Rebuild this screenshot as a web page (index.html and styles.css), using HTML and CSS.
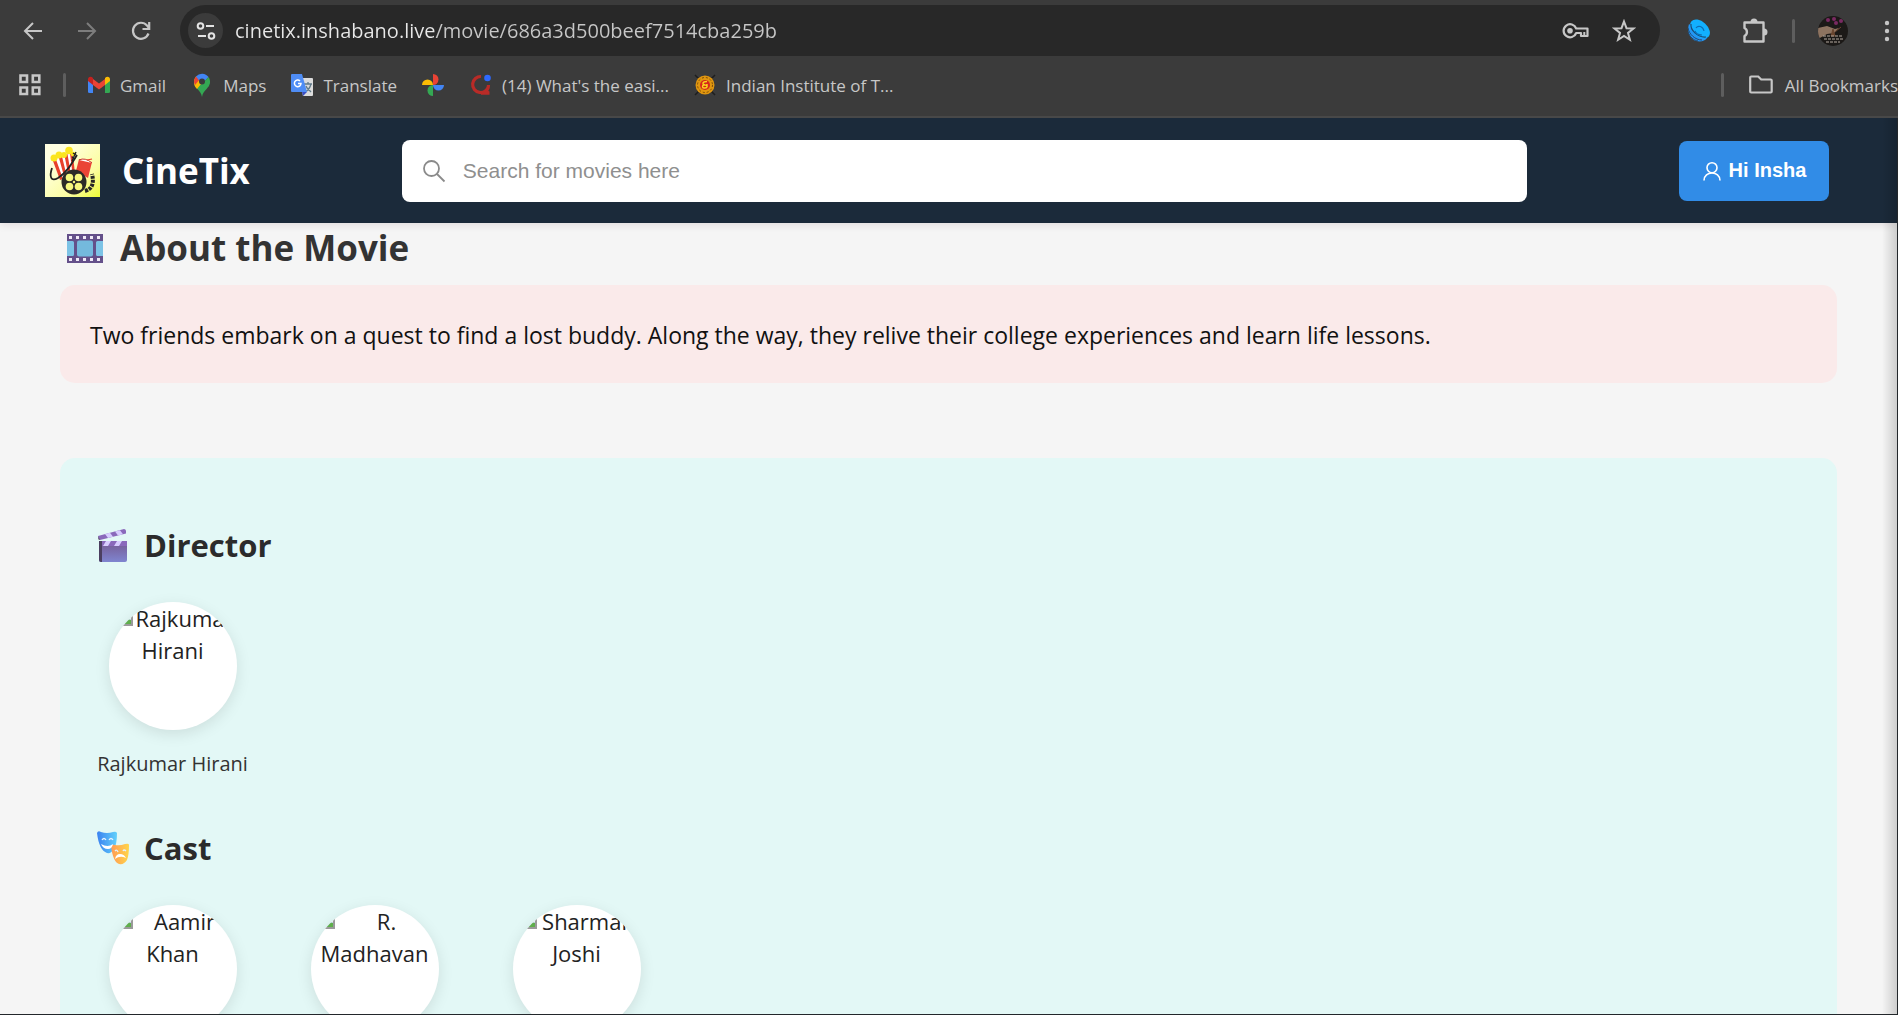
FILE: index.html
```html
<!DOCTYPE html>
<html lang="en">
<head>
<meta charset="utf-8">
<title>CineTix</title>
<link rel="stylesheet" href="styles.css">
</head>
<body>
<svg class="defs" aria-hidden="true">
  <symbol id="broken" viewBox="0 0 24 24">
    <path d="M2 2h20v20H2z" fill="#c9d9f2"/>
    <path d="M3 22v-5l6-4 5 3 8 2v4z" fill="#5fae4c"/>
    <path d="M14 16l8-8v9z" fill="#eef2ee"/>
    <path d="M1 1h22v22H1z" fill="none" stroke="#9a9a9a" stroke-width="2"/>
  </symbol>
</svg>

<header class="browser">
  <div class="toolbar">
    <div class="history">
      <button class="icon-btn" aria-label="Back"><svg width="20" height="20" viewBox="0 0 20 20"><path d="M19 10H2M10 2l-8 8 8 8" fill="none" stroke="#c7c7c7" stroke-width="2"/></svg></button>
      <button class="icon-btn" aria-label="Forward"><svg width="20" height="20" viewBox="0 0 20 20"><path d="M1 10h17M10 2l8 8-8 8" fill="none" stroke="#7d7d7d" stroke-width="2"/></svg></button>
      <button class="icon-btn" aria-label="Reload"><svg width="20" height="20" viewBox="0 0 20 20"><path d="M17.500 12.500A8 8 0 1 1 16 4.500L18 7M18.200 1v7H11.500" fill="none" stroke="#c7c7c7" stroke-width="2.200"/></svg></button>
    </div>
    <div class="address">
      <button class="site-btn" aria-label="Site information"><svg width="20" height="20" viewBox="0 0 20 20"><g fill="none" stroke="#e3e3e3" stroke-width="2"><circle cx="4.500" cy="5" r="2.800"/><path d="M10 5h8M2 15h8"/><circle cx="15.500" cy="15" r="2.800"/></g></svg></button>
      <input class="url" type="text" aria-label="Address" value="cinetix.inshabano.live/movie/686a3d500beef7514cba259b">
      <button class="icon-btn" aria-label="Passwords"><svg width="28" height="18" viewBox="0 0 28 18"><path d="M14.200 6.500A6.500 6.500 0 1 0 14.200 11H19v3h6.500V6.500z" fill="none" stroke="#c7c7c7" stroke-width="2.200" stroke-linejoin="round"/><circle cx="8" cy="8.700" r="2.800" fill="#c7c7c7"/><path d="M22.300 10v4" stroke="#c7c7c7" stroke-width="2"/></svg></button>
      <button class="icon-btn" aria-label="Bookmark this page"><svg width="24" height="24" viewBox="0 0 24 24"><path d="M12 2.500l2.500 6.700 7 .3-5.500 4.400 1.900 6.900L12 17l-5.900 3.800L8 13.900 2.500 9.500l7-.3z" fill="none" stroke="#c7c7c7" stroke-width="2"/></svg></button>
    </div>
    <div class="extensions">
      <button class="icon-btn" aria-label="Shazam extension"><svg width="24" height="24" viewBox="0 0 24 24"><path d="M2 5C0 11 2 20 9 22c5 1 9 0 11-3z" fill="#2496f5"/><path d="M1 9c1 6 7 12 14 12M1 13c2 5 5 8 10 9" fill="none" stroke="#234a70"/><ellipse cx="13" cy="10" rx="11.500" ry="7.500" transform="rotate(42 13 10)" fill="#12b0ff"/><path d="M4 5c-1 6 7 14 15 13" fill="none" stroke="#1c4a78" stroke-width="1.200"/><path d="M9 9c2-3 7-2 8 3M8 12c1 3 4 4 7 4" fill="none" stroke="#0d6db5" stroke-width="1.200"/></svg></button>
      <button class="icon-btn" aria-label="Extensions"><svg width="28" height="28" viewBox="0 0 28 28"><path d="M3.500 5.500h19v19h-19v-5.500a4.500 4.500 0 0 0 0-8z" fill="none" stroke="#c7c7c7" stroke-width="2.400" stroke-linejoin="round"/><path d="M9.500 5a3.500 3.500 0 0 1 7 0zM23 11.500a3.500 3.500 0 0 1 0 7z" fill="#c7c7c7"/></svg></button>
      <span class="divider"></span>
      <button class="icon-btn" aria-label="Profile"><svg width="30" height="30" viewBox="0 0 30 30"><clipPath id="av"><circle cx="15" cy="15" r="15"/></clipPath><g clip-path="url(#av)"><path d="M0 0h30v30H0z" fill="#1c1917"/><path d="M0 12l9-2 8 3 4-1-5 5-7 1-9 5z" fill="#8d7360"/><path d="M13 20l2-7 2 7zM17 16l6-5" fill="#6b4630" stroke="#6b4630"/><g fill="#7a2a62"><circle cx="10" cy="4" r="2"/><circle cx="16" cy="3" r="2"/><circle cx="18" cy="7" r="2"/><circle cx="23" cy="5" r="2"/></g><path d="M5 20h20M6 23h19M8 26h14" stroke="#b5aba2" stroke-dasharray="3 1"/></g></svg></button>
      <button class="icon-btn" aria-label="Menu"><svg width="6" height="24" viewBox="0 0 6 24"><g fill="#c7c7c7"><circle cx="3" cy="4" r="2.200"/><circle cx="3" cy="12" r="2.200"/><circle cx="3" cy="20" r="2.200"/></g></svg></button>
    </div>
  </div>
  <nav class="bookmarks" aria-label="Bookmarks">
    <a class="bookmark" href="#" aria-label="Apps"><svg width="24" height="24" viewBox="0 0 24 24"><path d="M2.500 2.500h6.500v6.500H2.500zM14.800 2.500h6.500v6.500h-6.500zM2.500 14.500h6.500v6.500H2.500zM14.800 14.500h6.500v6.500h-6.500z" fill="none" stroke="#c7c7c7" stroke-width="2.600"/></svg></a>
    <span class="divider"></span>
    <a class="bookmark" href="#"><svg width="24" height="24" viewBox="0 0 24 24"><path d="M1 6v13q0 1 1.500 1H6v-9z" fill="#4285f4"/><path d="M18 11v9h3.500q1.500 0 1.500-1V6z" fill="#34a853"/><path d="M6 12V6l6 4.500L18 6v6l-6 4.500z" fill="#ea4335"/><path d="M1 6.500C1 3.500 4 3 6 5v7l-5-4z" fill="#c5221f"/><path d="M23 6.500C23 3.500 20 3 18 5v7l5-4z" fill="#fbbc04"/></svg>Gmail</a>
    <a class="bookmark" href="#"><svg width="24" height="24" viewBox="0 0 24 24"><path d="M4 9c0 6 7 8 8 15 1-7 8-9 8-15z" fill="#34a853"/><path d="M4 9c0 3 1 5 3 7l8-10L6 3.500A8 8 0 0 0 4 9z" fill="#fbbc04"/><path d="M6 3.500A8 8 0 0 0 4 9l1 3 6-7z" fill="#ea4335"/><path d="M6 3.500A8 8 0 0 1 18.500 4L12 11z" fill="#4285f4"/><path d="M18.500 4C20 6 20 8 20 9l-2 5-6-3z" fill="#34a853"/><circle cx="12" cy="8.500" r="3" fill="#3b3b3b"/></svg>Maps</a>
    <a class="bookmark" href="#"><svg width="24" height="24" viewBox="0 0 24 24"><path d="M9 5h13q1 0 1 1v16q0 1-1 1h-9z" fill="#dcdcdc"/><path d="M14 11h8M18 9v2M15 19c4-2 5-4 6-8M16 13c1 3 3 4 5 6" fill="none" stroke="#607988" stroke-width="1.300"/><path d="M12 19h5l-4 4z" fill="#3a4fc4"/><path d="M2 1h10l5 18H2q-1 0-1-1V2q0-1 1-1z" fill="#4f8df5"/><path d="M10 8a3.300 3.300 0 1 0 1 2.500H8" fill="none" stroke="#fff" stroke-width="1.500"/></svg>Translate</a>
    <a class="bookmark" href="#" aria-label="Photos"><svg width="24" height="24" viewBox="0 0 24 24"><path d="M12 1a5.500 5.500 0 0 1 0 11z" fill="#ea4335"/><path d="M23 12a5.500 5.500 0 0 1-11 0z" fill="#4285f4"/><path d="M12 23a5.500 5.500 0 0 1 0-11z" fill="#34a853"/><path d="M1 12a5.500 5.500 0 0 1 11 0z" fill="#fbbc04"/></svg></a>
    <a class="bookmark" href="#"><svg width="24" height="24" viewBox="0 0 24 24"><path d="M12 3.500a8 8 0 1 0 7.500 9.500M19.500 12q0 5-4 6.500M12 20.200h8.500q-2 0-3-2.500" fill="none" stroke="#b92b27" stroke-width="3.200"/><circle cx="18.500" cy="5" r="3.300" fill="#2e69ff"/></svg>(14) What's the easi...</a>
    <a class="bookmark" href="#"><svg width="24" height="24" viewBox="0 0 24 24"><path d="M2 2l20 20M22 2L2 22" stroke="#1e1e1e" stroke-width="1.500"/><circle cx="12" cy="12" r="9.500" fill="#e0960f"/><circle cx="12" cy="12" r="7.500" fill="none" stroke="#7a4a08" stroke-dasharray="2 2"/><circle cx="12" cy="12" r="5" fill="#d8261c"/><path d="M14 8.500c-5 0-5 3-2 3.500 3 0 3 3.500-1 3-2 0-2-3 0-3M14 11v3" fill="none" stroke="#f9d71c" stroke-width="1.400"/></svg>Indian Institute of T...</a>
    <span class="divider push"></span>
    <a class="bookmark folder" href="#"><svg width="26" height="24" viewBox="0 0 26 24"><path d="M2.200 4.500q0-1 1-1h7l3 3h9.500q1 0 1 1v11q0 1-1 1H3.200q-1 0-1-1z" fill="none" stroke="#c7c7c7" stroke-width="2.200"/></svg>All Bookmarks</a>
  </nav>
</header>

<div class="page">
  <header class="navbar">
    <a class="brand" href="#">
      <svg width="55" height="53" viewBox="0 0 55 53">
        <defs><linearGradient id="lg" x1="0" y1="0" x2="1" y2="1"><stop offset="0.200" stop-color="#ffffe2"/><stop offset="0.700" stop-color="#fbfda0"/><stop offset="1" stop-color="#edfb35"/></linearGradient></defs>
        <path d="M0 0h55v53H0z" fill="url(#lg)"/>
        <path d="M8 17l19-9 3 22-15 6z" fill="#fff"/>
        <path d="M8 17l3-1.500L18 35l-3 1zM14 14l3-1.500L22 33l-2.500 1zM19.500 11.500l3-1.500L26 31l-2.500 1zM25 9l2.500-1L30 29l-2.500 1z" fill="#e8402c"/>
        <g fill="#fbe51f"><circle cx="9" cy="14" r="3.500"/><circle cx="14" cy="11" r="3.500"/><circle cx="19" cy="11" r="3"/><circle cx="24" cy="6.500" r="3.800"/><circle cx="28" cy="10" r="2.300"/></g>
        <path d="M7 24c-3 9-1 14 6 10C21 29 26 21 32 11" fill="none" stroke="#222" stroke-width="1.800"/><path d="M31 8l-4 9M28 9l3 2M27 13l3 2" stroke="#222" stroke-width="1.400"/>
        <path d="M34 15l13 3-4 16-12-7z" fill="#ea4436"/><path d="M34 16q6-3 13 3" fill="#fff" stroke="#c9362b"/><path d="M42 16l5-1" stroke="#e8402c" stroke-width="1.200"/>
        <path d="M40 47c8-2 9-9 7-17" fill="none" stroke="#262626" stroke-width="4" stroke-dasharray="3 1"/>
        <circle cx="29" cy="38" r="12.500" fill="#2b2a27"/>
        <g fill="#f7f87e"><circle cx="24.500" cy="33.500" r="3.800"/><circle cx="33.500" cy="33.500" r="3.800"/><circle cx="24.500" cy="42.500" r="3.800"/><circle cx="33.500" cy="42.500" r="3.800"/><circle cx="29" cy="38" r="1.200"/></g>
      </svg>
      <span>CineTix</span>
    </a>
    <label class="search">
      <svg width="24" height="24" viewBox="0 0 24 24"><g fill="none" stroke="#8a8a8a" stroke-width="1.800"><circle cx="9.500" cy="9.500" r="7.500"/><path d="M15 15l7.500 7.500"/></g></svg>
      <input type="search" placeholder="Search for movies here" aria-label="Search for movies here">
    </label>
    <button class="user"><svg width="20" height="20" viewBox="0 0 20 20"><g fill="none" stroke="#fff" stroke-width="1.600"><circle cx="10" cy="6.700" r="5"/><path d="M2 19.500c0-10 16-10 16 0"/></g></svg>Hi Insha</button>
  </header>

  <main class="content">
    <h1 class="about-title">
      <svg width="36" height="29" viewBox="0 0 36 29"><path d="M0 0h36v29H0z" fill="#64508a"/><path d="M0 7h5.500q1.500 0 1.500 1.500v12q0 1.500-1.500 1.500H0zM36 7h-5.500q-1.500 0-1.500 1.500v12q0 1.500 1.500 1.500H36z" fill="#7cc3e6"/><rect x="10" y="6.500" width="16" height="16" rx="2" fill="#74b9dd"/><g fill="#efe9f7"><path d="M2 2h3v3H2zM9 2h3v3H9zM16 2h3v3h-3zM23 2h3v3h-3zM30 2h3v3h-3zM2 24h3v3H2zM9 24h3v3H9zM16 24h3v3h-3zM23 24h3v3h-3zM30 24h3v3h-3z"/></g></svg>
      About the Movie
    </h1>
    <p class="summary">Two friends embark on a quest to find a lost buddy. Along the way, they relive their college experiences and learn life lessons.</p>

    <section class="people">
      <h2 class="group-title">
        <svg width="32" height="34" viewBox="0 0 32 34"><defs><linearGradient id="cb" x1="0" y1="0" x2="0" y2="1"><stop offset="0" stop-color="#75588f"/><stop offset="1" stop-color="#7f85d0"/></linearGradient></defs><path d="M1 8L27 1q1.500 0 2 1.500v3L3 12q-1.500-1-2-4z" fill="#8a69bb"/><path d="M8 6l5-1.300 3 4-5 1.300zM18 3.500l5-1.300 3 4-5 1.300z" fill="#d7ccff"/><path d="M1 8l2 4-1.500-.5z" fill="#4b3c57"/><path d="M2 13h28v19q0 2-2 2H4q-2 0-2-2z" fill="url(#cb)"/><path d="M2 13h28v5H2z" fill="#8a69bb"/><path d="M9 13h5l-3 5H6zM20 13h5l-3 5h-5z" fill="#d7ccff"/><path d="M2 13h3v21H4q-2 0-2-2z" fill="#4b3f60"/></svg>
        Director
      </h2>
      <ul class="cards">
        <li class="card">
          <div class="photo"><svg width="24" height="24"><use href="#broken"/></svg>Rajkumar Hirani</div>
          <span class="name">Rajkumar Hirani</span>
        </li>
      </ul>

      <h2 class="group-title">
        <svg width="32" height="34" viewBox="0 0 32 34"><defs><linearGradient id="mb"><stop offset="0" stop-color="#3b82f0"/><stop offset="1" stop-color="#62d0fb"/></linearGradient><linearGradient id="mo"><stop offset="0" stop-color="#ff9a55"/><stop offset="1" stop-color="#ffd54a"/></linearGradient></defs><path d="M0 2q1-3 4-1 6 2 12 0 3-1 4 1 0 11-3 16-3 5-7 4-8-3-10-20z" fill="url(#mb)"/><path d="M14 15q1-2 4-1 5 1 10-1 4-1 4 1 0 10-2 15-3 5-8 4-6-2-8-18z" fill="url(#mo)"/><path d="M5 9q2-3 4 0M12 9q2-3 4 0M18 20q2-2 3 1M26 20q1-2 3 0" fill="none" stroke="#e4f1ff" stroke-width="1.300"/><path d="M4 13q7 4 12 0-1 5-5 5-5 0-7-5zM18 28q1-5 5-5 4 0 6 4-6-3-11 1z" fill="#fff"/></svg>
        Cast
      </h2>
      <ul class="cards">
        <li class="card"><div class="photo"><svg width="24" height="24"><use href="#broken"/></svg>Aamir Khan</div></li>
        <li class="card"><div class="photo"><svg width="24" height="24"><use href="#broken"/></svg>R. Madhavan</div></li>
        <li class="card"><div class="photo"><svg width="24" height="24"><use href="#broken"/></svg>Sharman Joshi</div></li>
      </ul>
    </section>
  </main>
</div>
</body>
</html>
```

FILE: styles.css
```css
* { box-sizing: border-box; }

body {
  margin: 0;
  height: 100vh;
  display: flex;
  flex-direction: column;
  overflow: hidden;
  background: #f5f5f5;
  font-family: "Open Sans", "Noto Sans", sans-serif;
}

h1, h2, p, ul { margin: 0; padding: 0; }
ul { list-style: none; }
button { border: 0; padding: 0; background: none; cursor: pointer; }
svg { display: block; flex: none; }
.defs { display: none; }

/* Browser chrome */
.browser {
  flex: none;
  background: #3b3b3b;
  border-bottom: 2px solid #484848;
  color: #c7c7c7;
}

.toolbar {
  display: flex;
  align-items: center;
  padding-top: 5px;
}

.history {
  display: flex;
  gap: 34px;
  padding: 0 29px 0 23px;
}

.address {
  flex: 1;
  display: flex;
  align-items: center;
  gap: 22px;
  height: 51px;
  padding: 0 24px 0 8px;
  border-radius: 26px;
  background: #282828;
}

.site-btn {
  display: grid;
  place-items: center;
  width: 35px;
  height: 35px;
  border-radius: 50%;
  background: #3b3b3b;
}

/* host name is brighter than the path */
.url {
  flex: 1;
  min-width: 0;
  margin-left: -10px;
  padding: 0;
  border: 0;
  outline: 0;
  font: 20px "Open Sans", sans-serif;
  color: transparent;
  background: linear-gradient(90deg, #e8e8e8 200px, #c7c7c7 200px);
  background-clip: text;
  -webkit-background-clip: text;
}

.extensions {
  display: flex;
  align-items: center;
  gap: 23px;
  padding: 0 8px 0 27px;
}

.extensions .icon-btn:first-child { margin-right: 7px; }
.extensions .icon-btn:last-child { margin-left: 13px; }

.divider {
  flex: none;
  width: 3px;
  height: 24px;
  border-radius: 2px;
  background: #5e5e5e;
}

.bookmarks {
  display: flex;
  align-items: center;
  gap: 24px;
  height: 60px;
  padding: 0 0 2px 18px;
}

.bookmarks .divider { margin: 0 -3px; }
.bookmarks .push { margin: 0 0 0 auto; }

.bookmark {
  display: flex;
  align-items: center;
  gap: 9px;
  font-size: 17px;
  white-space: nowrap;
  color: #c7c7c7;
  text-decoration: none;
}

.folder { gap: 11px; }

/* Site */
.page {
  flex: 1;
  min-height: 0;
  position: relative;
  overflow: hidden;
  border: solid #23272b;
  border-width: 0 1px 1px 0;
}

/* soft shade along the right window edge */
.page::after {
  content: "";
  position: absolute;
  inset: 0 0 0 auto;
  width: 15px;
  background: linear-gradient(90deg, transparent, rgba(0, 0, 0, 0.16));
}

.navbar {
  position: relative;
  display: flex;
  align-items: center;
  gap: 152px;
  height: 105px;
  padding: 0 68px 0 45px;
  background: #1b2a3a;
  box-shadow: 0 2px 8px rgba(60, 0, 30, 0.1);
}

.brand {
  display: flex;
  align-items: center;
  gap: 22px;
  color: #fff;
  font-size: 35px;
  font-weight: 700;
  text-decoration: none;
}

.search {
  flex: 1;
  display: flex;
  align-items: center;
  gap: 17px;
  height: 62px;
  padding: 0 20px;
  border-radius: 8px;
  background: #fff;
}

.search input {
  flex: 1;
  border: 0;
  padding: 0;
  outline: 0;
  font: 21px "Liberation Sans", Arial, sans-serif;
  background: none;
}

.search input::placeholder { color: #8f8f8f; opacity: 1; }

.user {
  display: flex;
  align-items: center;
  justify-content: center;
  gap: 7px;
  width: 150px;
  height: 60px;
  border-radius: 8px;
  background: #318ce7;
  color: #fff;
  font: bold 20px "Liberation Sans", Arial, sans-serif;
}

.content { padding: 0 60px; }

.about-title {
  display: flex;
  align-items: center;
  gap: 17px;
  padding-left: 7px;
  margin-bottom: 12px;
  font-size: 35px;
  line-height: 50px;
  color: #333;
}

.summary {
  margin-bottom: 75px;
  padding: 31px 30px 29px;
  border-radius: 15px;
  background: #faeaea;
  font-size: 23px;
  line-height: 38px;
  color: #111;
}

.people {
  padding: 67px 37px;
  border-radius: 15px;
  background: #e3f8f6;
}

.group-title {
  display: flex;
  align-items: center;
  gap: 15px;
  margin-bottom: 37px;
  font-size: 31px;
  line-height: 40px;
  color: #2b2b2b;
}

.cards {
  display: flex;
  gap: 51px;
  margin-bottom: 48px;
}

.card {
  display: flex;
  flex-direction: column;
  align-items: center;
  gap: 18px;
  width: 151px;
}

.photo {
  width: 128px;
  height: 128px;
  overflow: hidden;
  border-radius: 50%;
  background: #fff;
  box-shadow: 0 4px 15px rgba(0, 0, 0, 0.1);
  font-size: 22px;
  line-height: 32px;
  text-align: center;
  color: #222;
}

.photo svg { float: left; }

.name {
  font-size: 20px;
  line-height: 32px;
  white-space: nowrap;
  color: #333;
}
```
